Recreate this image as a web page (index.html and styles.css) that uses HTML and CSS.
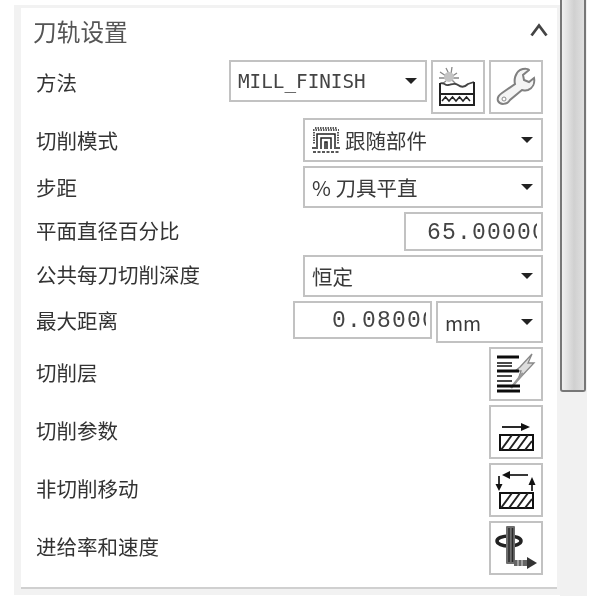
FILE: index.html
```html
<!DOCTYPE html>
<html lang="zh">
<head>
<meta charset="utf-8">
<title>刀轨设置</title>
<link rel="stylesheet" href="styles.css">
</head>
<body>
<div class="page">
  <div class="frame">
    <section class="panel">
      <header class="head">
        <span class="title">刀轨设置</span>
        <svg class="chev" width="18" height="14" viewBox="0 0 18 14"><path d="M1.500 12.500 9 2.500l7.500 10" fill="none" stroke="#444" stroke-width="2.800"/></svg>
      </header>
      <div class="row r-method">
        <span class="label label-tall">方法</span>
        <div class="controls">
          <div class="field w-method mono"><span>MILL_FINISH</span><i class="caret"></i></div>
          <button class="btn" aria-label="method">
            <svg width="40" height="40" viewBox="0 0 40 40">
              <g fill="none" stroke="#888" stroke-width="1.300"><path d="M8 1l3 6M14 0l-1 7M2 5l6 4M19 6l-6 4M1 11h7M21 11h-6M4 17l4-3M18 17l-4-4"/></g>
              <circle cx="11" cy="10" r="5" fill="#c4c4c4"/>
              <path d="M2 17c3-3 5 2 8 1 3 0 6-3 10 0s7 2 10-1l6-2" fill="none" stroke="#444" stroke-width="1.800"/>
              <path d="M2 16v22h34V15M2 27h34M2 38h34" fill="none" stroke="#222" stroke-width="2"/>
              <path d="M4 34l3.500-4 3.500 4 3.500-4 3.500 4 3.500-4 3.500 4 3.500-4 3.500 4" fill="none" stroke="#222" stroke-width="1.500"/>
            </svg>
          </button>
          <button class="btn" aria-label="wrench">
            <svg width="40" height="40" viewBox="0 0 40 40"><path d="M24 3c5-2 9-1 9 0l-6 5 1 5 5 2 5-4c1 5-1 10-6 12-3 1-5 0-6 0L14 33c-3 5-10 5-12 1-1-3 1-6 4-8l13-9c-1-4 0-11 5-14z" fill="#f4f4f4" stroke="#808080" stroke-width="2"/><circle cx="8" cy="32" r="2" fill="#fff" stroke="#888"/></svg>
          </button>
        </div>
      </div>
      <div class="row r-mode">
        <span class="label label-first">切削模式</span>
        <div class="field w-wide sans">
          <span class="with-icon">
            <svg width="28" height="28" viewBox="0 0 28 28"><g fill="none" stroke="#222" stroke-width="1.500"><path d="M3 2h22M1 4h26" stroke-dasharray="1.500 1"/><path d="M5 23V8h18v15M9 23V12h10v11M13 23v-7h2v7"/><path d="M2 6v12M26 6v12" stroke-dasharray="1.500 1"/><path d="M0 22h4M24 22h4"/><path d="M1 26h26" stroke-dasharray="3 1.500"/></g></svg>
            跟随部件
          </span><i class="caret"></i>
        </div>
      </div>
      <div class="row r-std">
        <span class="label label-first">步距</span>
        <div class="field w-wide sans"><span>% 刀具平直</span><i class="caret"></i></div>
      </div>
      <div class="row r-num">
        <span class="label">平面直径百分比</span>
        <div class="input w-num mono-num pad-a"><span class="val">65.00000</span></div>
      </div>
      <div class="row r-std">
        <span class="label">公共每刀切削深度</span>
        <div class="field w-wide sans"><span>恒定</span><i class="caret"></i></div>
      </div>
      <div class="row r-std r-dist">
        <span class="label">最大距离</span>
        <div class="controls">
          <div class="input w-num short mono-num pad-b"><span class="val">0.08000</span></div>
          <div class="field w-unit unit"><span>mm</span><i class="caret"></i></div>
        </div>
      </div>
      <div class="row r-btn">
        <span class="label">切削层</span>
        <button class="btn" aria-label="切削层">
          <svg width="40" height="42" viewBox="0 0 40 42">
            <path d="M24 14 36 1l-4 9h6L22 27l3-9h-6z" fill="#ddd" stroke="#888" stroke-width="1.300"/>
            <path d="M15 35 27 20" stroke="#999" stroke-width="2.500"/>
            <g stroke="#0c0c0c"><path d="M1 4h22M1 18h22M1 33h23M1 38h23" stroke-width="3"/><path d="M1 10h15M1 13h15M1 23h15M1 28h15" stroke-width="1.500"/></g>
          </svg>
        </button>
      </div>
      <div class="row r-btn">
        <span class="label">切削参数</span>
        <button class="btn" aria-label="切削参数">
          <svg width="40" height="42" viewBox="0 0 40 42">
            <path d="M6 16h20" stroke="#111" stroke-width="1.800"/><path d="M25 12l9 4-9 4z" fill="#111"/>
            <rect x="4" y="24" width="33" height="15" fill="#fff" stroke="#111" stroke-width="2"/>
            <path d="M5 39 16 24M13 39l11-15M21 39l11-15M29 39l7-9" stroke="#222" stroke-width="2"/>
          </svg>
        </button>
      </div>
      <div class="row r-btn">
        <span class="label">非切削移动</span>
        <button class="btn" aria-label="非切削移动">
          <svg width="44" height="46" viewBox="0 0 44 46">
            <path d="M15 8h19" stroke="#222" stroke-width="1.800"/><path d="M16 4 8 8l8 4z" fill="#111"/>
            <path d="M5 9v10M38 15v9" stroke="#222" stroke-width="1.800"/><path d="M1.500 17h7L5 24zM34.500 18h7L38 10z" fill="#111"/>
            <rect x="6" y="26" width="33" height="15" fill="#fff" stroke="#111" stroke-width="2"/>
            <path d="M7 41 18 26M15 41l11-15M23 41l11-15M31 41l7-9" stroke="#222" stroke-width="2"/>
          </svg>
        </button>
      </div>
      <div class="row r-btn">
        <span class="label">进给率和速度</span>
        <button class="btn" aria-label="进给率和速度">
          <svg width="44" height="44" viewBox="0 0 44 44">
            <ellipse cx="15" cy="15" rx="12" ry="5" fill="none" stroke="#222" stroke-width="3.500"/>
            <rect x="12" y="0" width="9" height="38" rx="1" fill="#6e6e6e"/>
            <path d="M15 2v34M18.500 2v34" stroke="#2a2a2a" stroke-width="1.500"/>
            <rect x="20" y="34" width="13" height="6" fill="#666"/>
            <path d="M33 31l10 6-10 6z" fill="#333"/>
            <path d="M24 34v6M28 34v6" stroke="#ccc" stroke-width="1.200"/>
          </svg>
        </button>
      </div>
    </section>
  </div>
  <div class="scroll"><div class="thumb"></div></div>
</div>
</body>
</html>
```
FILE: styles.css
```css
html, body { margin: 0; padding: 0; background: #fff; }
.page {
  display: flex;
  align-items: flex-start;
  width: 597px;
  height: 604px;
  overflow: hidden;
  filter: blur(0.55px);
  font-family: "Noto Sans CJK SC", "Noto Sans CJK JP", sans-serif;
  color: #333;
}
.frame {
  box-sizing: border-box;
  width: 546px;
  height: 590px;
  margin: 5px 0 0 14px;
  padding: 3px 3px 0 7px;
  background: #f2f2f2;
}
.panel {
  box-sizing: border-box;
  height: 581px;
  padding: 0 14px 0 15px;
  background: #fff;
  border-bottom: 2px solid #d0d0d0;
  display: flex;
  flex-direction: column;
  gap: 4px;
}
.head {
  height: 48px;
  display: flex;
  align-items: center;
  justify-content: space-between;
  margin-left: -3px;
}
.title { font-size: 23.700px; color: #555; position: relative; top: -1px; }
.chev { margin-right: -5px; position: relative; top: -2px; }
.row {
  display: flex;
  align-items: center;
  justify-content: space-between;
}
.label { font-size: 20.500px; line-height: 28px; padding-bottom: 4px; white-space: nowrap; }
.label-first { padding-bottom: 1px; }
.label-tall { line-height: 44px; padding-bottom: 0; }
.controls { display: flex; align-items: flex-start; gap: 4px; }
.r-method { height: 54px; align-items: flex-start; }
.r-mode { height: 44px; }
.r-std { height: 42px; }
.r-num { height: 39px; }
.r-btn { height: 54px; }
.field, .input {
  box-sizing: border-box;
  border: 2px solid #c2c2c2;
  background: #fff;
  white-space: nowrap;
  overflow: hidden;
}
.field {
  height: 100%;
  display: flex;
  align-items: center;
  justify-content: space-between;
  padding: 0 8px 0 7px;
}
.controls .field { height: 42px; }
.input {
  height: 100%;
  display: flex;
  align-items: center;
}
.pad-a { padding: 2px 4px 0 21px; }
.pad-b { padding: 2px 4px 0 37px; }
.val { flex: 1; min-width: 0; overflow: hidden; }
.short { height: 38px; }
.w-method { width: 198px; }
.w-wide { width: 240px; }
.w-num { width: 139px; }
.w-unit { width: 107px; }
.mono { font-family: "DejaVu Sans Mono", monospace; font-size: 19.300px; color: #444; }
.mono-num {
  font-family: "Liberation Mono", monospace;
  font-size: 23px;
  letter-spacing: 1.200px;
  color: #444;
}
.sans { font-size: 20.500px; color: #3a3a3a; }
.unit { font-size: 19.500px; color: #3a3a3a; }
.with-icon { display: flex; align-items: center; gap: 5px; }
.caret {
  flex: none;
  width: 0;
  height: 0;
  border-left: 6px solid transparent;
  border-right: 6px solid transparent;
  border-top: 6px solid #222;
}
.btn {
  box-sizing: border-box;
  flex: none;
  width: 54px;
  height: 54px;
  padding: 0;
  border: 2px solid #c2c2c2;
  background: #fff;
  display: flex;
  align-items: center;
  justify-content: center;
}
.scroll {
  box-sizing: border-box;
  width: 27px;
  height: 596px;
  background: #f1f1f1;
}
.thumb {
  box-sizing: border-box;
  height: 392px;
  width: 26px;
  border: 2px solid #777;
  border-top: 0;
  border-radius: 0 0 3px 3px;
  background: linear-gradient(90deg, #f0f0f0, #d0d0d0 55%, #e0e0e0);
}
```
